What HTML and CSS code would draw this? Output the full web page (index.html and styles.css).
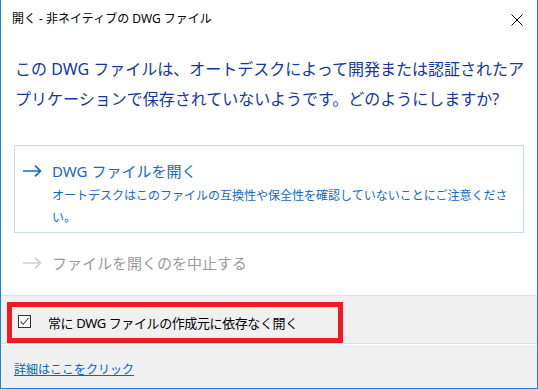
FILE: index.html
```html
<!DOCTYPE html>
<html lang="ja">
<head>
    <meta charset="UTF-8" />
    <meta name="viewport" content="width=device-width, initial-scale=1.0" />
    <title>開く - 非ネイティブの DWG ファイル</title>
    <link rel="stylesheet" href="styles.css">
</head>
<body>
    <div class="window">
        <div class="titlebar">
            <span class="title">開く - 非ネイティブの DWG ファイル</span>
            <svg class="close" width="12" height="12" viewBox="0 0 12 12">
                <path d="M0.5 0.5 L11.5 11.5 M11.5 0.5 L0.5 11.5" stroke="#000" stroke-width="1" fill="none" />
            </svg>
        </div>

        <div class="content">
            <div class="instruction">
                この DWG ファイルは、オートデスクによって開発または認証されたア<br>プリケーションで保存されていないようです。どのようにしますか?
            </div>

            <div class="command-link primary">
                <svg class="arrow" width="19" height="12" viewBox="0 0 19 12">
                    <path d="M0 6 H17.5 M12 0.7 L17.5 6 L12 11.3" stroke="currentColor" stroke-width="1.7" fill="none" />
                </svg>
                <div class="link-text">
                    <div class="link-title">DWG ファイルを開く</div>
                    <div class="link-note">オートデスクはこのファイルの互換性や保全性を確認していないことにご注意くださ<br>い。</div>
                </div>
            </div>

            <div class="command-link disabled">
                <svg class="arrow" width="19" height="12" viewBox="0 0 19 12">
                    <path d="M0 6 H17.5 M12 0.7 L17.5 6 L12 11.3" stroke="currentColor" stroke-width="1.7" fill="none" />
                </svg>
                <div class="link-text">
                    <div class="link-title">ファイルを開くのを中止する</div>
                </div>
            </div>
        </div>

        <div class="footer">
            <div class="highlight">
                <span class="checkbox">
                    <svg width="11" height="11" viewBox="0 0 11 11">
                        <path d="M1.5 5.5 L4.2 8.3 L9.6 2" stroke="#444" stroke-width="1.1" fill="none" />
                    </svg>
                </span>
                <span class="check-label">常に DWG ファイルの作成元に依存なく開く</span>
            </div>
        </div>

        <div class="footer-links">
            <a class="more" href="#">詳細はここをクリック</a>
        </div>
    </div>
</body>
</html>
```

FILE: styles.css
```css
html, body {
    margin: 0;
    padding: 0;
}

body {
    width: 538px;
    height: 389px;
    font-family: "Noto Sans", "Noto Sans CJK JP", sans-serif;
    background: #fff;
    color: #000;
}

.window {
    box-sizing: border-box;
    height: 389px;
    border: 1px solid #1883d7;
    border-top: none;
    display: flex;
    flex-direction: column;
}

.titlebar {
    height: 40px;
    display: flex;
    align-items: center;
    justify-content: space-between;
    padding: 0 14px 2px 11px;
    box-sizing: border-box;
}

.title {
    font-size: 12px;
    line-height: 16px;
}

.close {
    display: block;
    margin-top: 1px;
}

.content {
    height: 255px;
    padding: 14px 13px 0 13px;
    box-sizing: border-box;
}

.instruction {
    font-size: 16px;
    line-height: 30px;
    color: #14369e;
    padding-left: 1px;
    white-space: nowrap;
}

.command-link {
    display: flex;
    align-items: flex-start;
}

.command-link .arrow {
    flex: none;
    margin: 5px 0 0 0;
}

.link-text {
    margin-left: 10px;
    white-space: nowrap;
}

.link-title {
    font-size: 15px;
    line-height: 22px;
}

.primary {
    margin-top: 31px;
    border: 1px solid #c4dcf2;
    padding: 14px 4px 3px 8px;
    color: #1368c9;
}

.link-note {
    font-size: 12px;
    line-height: 22px;
    margin-top: 3px;
}

.disabled {
    margin-top: 19px;
    padding-left: 9px;
    color: #9a9a9a;
}

.disabled .arrow {
    color: #cfcfcf;
}

.footer {
    height: 49px;
    box-sizing: border-box;
    border-top: 1px solid #dfdfdf;
    border-bottom: 1px solid #dfdfdf;
    background: #f0f0f0;
    padding: 6px 0 0 6px;
}

.highlight {
    box-sizing: border-box;
    width: 336px;
    height: 41px;
    border: 5px solid #ed1c24;
    display: flex;
    align-items: center;
    padding-left: 6px;
}

.checkbox {
    box-sizing: border-box;
    width: 13px;
    height: 13px;
    border: 1px solid #333;
    background: #fff;
    display: flex;
    align-items: center;
    justify-content: center;
    margin-top: -3px;
}

.checkbox svg {
    display: block;
}

.check-label {
    font-size: 13px;
    line-height: 18px;
    margin-left: 17px;
    letter-spacing: -0.4px;
}

.footer-links {
    flex: 1;
    border-top: 1px solid #fff;
    background: #f0f0f0;
    padding: 12px 13px 0 13px;
}

.more {
    font-size: 12px;
    line-height: 16px;
    color: #0066cc;
    text-decoration: underline;
}
```
